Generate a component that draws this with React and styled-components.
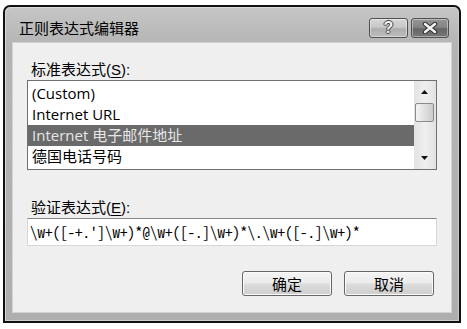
import React, { useState } from 'react'
import styled, { createGlobalStyle } from 'styled-components'

const GlobalStyle = createGlobalStyle`
  html, body {
    margin: 0;
    padding: 0;
    background: #ffffff;
  }
  body {
    font-family: "Open Sans", "Liberation Sans", "Noto Sans CJK SC", sans-serif;
    color: #000;
  }
`

const patterns = [
  '(Custom)',
  'Internet URL',
  'Internet 电子邮件地址',
  '德国电话号码',
]

function App() {
  const [selected, setSelected] = useState(2)

  return (
    <Page>
      <GlobalStyle />
      <Window>
        <TitleBar>
          <Title>正则表达式编辑器</Title>
          <CaptionButtons>
            <CaptionButton>
              <HelpMark>?</HelpMark>
            </CaptionButton>
            <CaptionButton close>
              <svg width="16" height="12" viewBox="0 0 16 12">
                <path d="M3 2 L13 10 M13 2 L3 10" stroke="#333" strokeWidth="4.5" strokeLinecap="round" />
                <path d="M3 2 L13 10 M13 2 L3 10" stroke="#f4f4f4" strokeWidth="2.4" strokeLinecap="round" />
              </svg>
            </CaptionButton>
          </CaptionButtons>
        </TitleBar>

        <Client>
          <Label>标准表达式(<u>S</u>):</Label>
          <ListBox>
            <Items>
              {patterns.map((item, i) => (
                <Item key={item} active={i === selected} onClick={() => setSelected(i)}>
                  {item}
                </Item>
              ))}
            </Items>
            <ScrollBar>
              <Arrow>
                <svg width="7" height="4" viewBox="0 0 7 4"><path d="M3.5 0 L7 4 L0 4 Z" fill="#111" /></svg>
              </Arrow>
              <Thumb />
              <Track />
              <Arrow>
                <svg width="7" height="4" viewBox="0 0 7 4"><path d="M0 0 L7 0 L3.5 4 Z" fill="#111" /></svg>
              </Arrow>
            </ScrollBar>
          </ListBox>

          <Label second>验证表达式(<u>E</u>):</Label>
          <TextField>{"\\w+([-+.']\\w+)*@\\w+([-.]\\w+)*\\.\\w+([-.]\\w+)*"}</TextField>

          <ButtonRow>
            <Button>确定</Button>
            <Button>取消</Button>
          </ButtonRow>
        </Client>
      </Window>
    </Page>
  )
}

const Page = styled.div`
  padding: 5px 6px 6px 3px;
  width: 458px;
`

const Window = styled.div`
  display: flex;
  flex-direction: column;
  height: 318px;
  box-sizing: border-box;
  border: 2px solid #111;
  border-radius: 7px 7px 0 0;
  background: linear-gradient(180deg, #c6c6c6 0%, #b4b4b4 12%, #afafaf 100%);
  box-shadow: inset 1px 1px 0 #d8d8d8, inset -1px -1px 0 #cccccc;
`

const TitleBar = styled.div`
  display: flex;
  align-items: center;
  height: 35px;
  box-sizing: border-box;
  padding: 9px 10px 2px 14px;
`

const Title = styled.div`
  flex: 1;
  font-family: "Noto Sans CJK SC", sans-serif;
  font-size: 15px;
  line-height: 20px;
  color: #000;
`

const CaptionButtons = styled.div`
  display: flex;
  gap: 3px;
`

const CaptionButton = styled.div`
  display: flex;
  align-items: center;
  justify-content: center;
  width: ${p => (p.close ? '38px' : '39px')};
  height: 20px;
  box-sizing: border-box;
  border: 1px solid #505050;
  border-radius: 3px;
  background: ${p => p.close
    ? 'linear-gradient(180deg, #959595 0%, #858585 45%, #666666 55%, #787878 100%)'
    : 'linear-gradient(180deg, #d6d6d6 0%, #c8c8c8 45%, #aeaeae 55%, #bcbcbc 100%)'};
  box-shadow: inset 0 0 0 1px rgba(255, 255, 255, 0.4);
`

const HelpMark = styled.span`
  font-family: "Liberation Sans", sans-serif;
  font-weight: bold;
  font-size: 16px;
  line-height: 16px;
  color: #f2f2f2;
  text-shadow: 1px 0 0 #444, -1px 0 0 #444, 0 1px 0 #444, 0 -1px 0 #444;
`

const Client = styled.div`
  flex: 1;
  display: flex;
  flex-direction: column;
  margin: 0 7px 8px 7px;
  padding: 0 14px;
  background: #efefef;
  border: 1px solid #d2d2d2;
`

const Label = styled.div`
  margin: ${p => (p.second ? '28px 0 0 4px' : '17px 0 0 4px')};
  font-family: "Liberation Sans", "Noto Sans CJK SC", sans-serif;
  font-size: 15px;
  line-height: 20px;
  color: #000;

  u {
    text-underline-offset: 2px;
  }
`

const ListBox = styled.div`
  display: flex;
  height: 90px;
  box-sizing: border-box;
  border: 1px solid #707070;
  background: #ffffff;
`

const Items = styled.div`
  flex: 1;
  padding-top: 2px;
`

const Item = styled.div`
  height: 21px;
  padding-left: 4px;
  font-family: "Open Sans", "Noto Sans CJK SC", sans-serif;
  font-size: 15px;
  line-height: 21px;
  color: ${p => (p.active ? '#e6e6e6' : '#000')};
  background: ${p => (p.active ? '#6a6a6a' : 'transparent')};
  white-space: nowrap;
`

const ScrollBar = styled.div`
  display: flex;
  flex-direction: column;
  width: 22px;
  padding: 0 2px 0 1px;
  box-sizing: border-box;
  background: linear-gradient(90deg, #e2e2e2, #efefef 50%, #e2e2e2);
`

const Arrow = styled.div`
  display: flex;
  align-items: center;
  justify-content: center;
  height: 22px;
`

const Thumb = styled.div`
  height: 19px;
  box-sizing: border-box;
  border: 1px solid #8a8a8a;
  border-radius: 2px;
  background: linear-gradient(90deg, #f4f4f4 0%, #e0e0e0 50%, #cccccc 100%);
`

const Track = styled.div`
  flex: 1;
`

const TextField = styled.div`
  height: 28px;
  box-sizing: border-box;
  padding: 0 2px;
  border: 1px solid #d6d6d6;
  border-top-color: #868686;
  background: #ffffff;
  font-family: "Noto Sans Mono CJK SC", "Liberation Mono", monospace;
  font-size: 15px;
  line-height: 26px;
  color: #000;
  white-space: nowrap;
  overflow: hidden;
`

const ButtonRow = styled.div`
  display: flex;
  justify-content: flex-end;
  gap: 12px;
  margin-top: 25px;
  padding-right: 3px;
`

const Button = styled.button`
  width: 90px;
  height: 25px;
  padding: 0;
  border: 1px solid #666;
  border-radius: 3px;
  background: linear-gradient(180deg, #f4f4f4 0%, #ebebeb 48%, #dcdcdc 52%, #cecece 100%);
  box-shadow: inset 0 0 0 1px #fbfbfb;
  font-family: "Noto Sans CJK SC", sans-serif;
  font-size: 15px;
  color: #000;
`

export default App
